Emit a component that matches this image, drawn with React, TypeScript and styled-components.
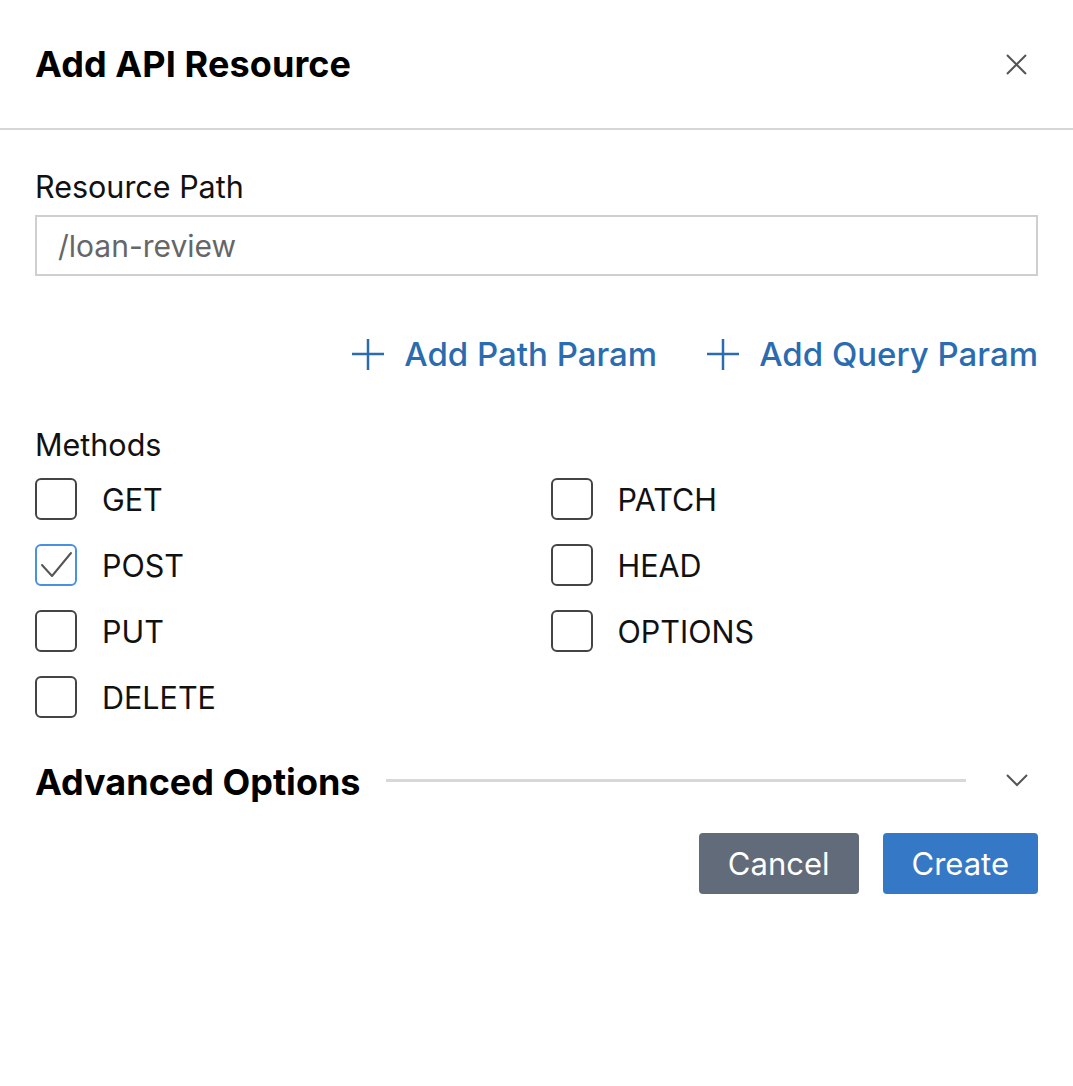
import React from 'react';
import styled, { createGlobalStyle } from 'styled-components';

const GlobalStyle = createGlobalStyle`
  html, body {
    margin: 0;
    padding: 0;
    background: #ffffff;
  }
  body {
    font-family: Inter, "Noto Sans", "Liberation Sans", sans-serif;
    color: #111111;
  }
  * {
    box-sizing: border-box;
  }
`;

const Dialog = styled.div`
  width: 1073px;
  min-height: 1086px;
  background: #ffffff;
`;

const Header = styled.div`
  height: 130px;
  padding: 0 46px 0 35px;
  display: flex;
  align-items: center;
  justify-content: space-between;
  border-bottom: 2px solid #d6d6d6;
`;

const Title = styled.h1`
  margin: 0;
  font-size: 36px;
  font-weight: 700;
  letter-spacing: 0.1px;
  line-height: 44px;
  color: #000;
`;

const IconButton = styled.button`
  border: none;
  background: none;
  padding: 0;
  width: 22px;
  height: 22px;
  display: flex;
  align-items: center;
  justify-content: center;
  color: #555;
  cursor: pointer;
`;

const Body = styled.div`
  padding: 38px 35px 0 35px;
  display: flex;
  flex-direction: column;
`;

const Label = styled.label`
  display: block;
  font-size: 30.5px;
  line-height: 38px;
  color: #111;
`;

const TextInput = styled.input`
  margin-top: 9px;
  width: 100%;
  height: 61px;
  border: 2px solid #cfcfcf;
  border-radius: 0;
  padding: 0 21px;
  font-family: inherit;
  font-size: 30px;
  color: #666;
  outline: none;
`;

const ParamRow = styled.div`
  margin-top: 58px;
  display: flex;
  justify-content: flex-end;
  gap: 50px;
`;

const LinkButton = styled.button`
  border: none;
  background: none;
  padding: 0;
  display: flex;
  align-items: center;
  gap: 20px;
  font-family: inherit;
  font-size: 33px;
  font-weight: 500;
  line-height: 40px;
  color: #2b6cb0;
  cursor: pointer;
`;

const MethodsLabel = styled(Label)`
  margin-top: 52px;
`;

const MethodGrid = styled.div`
  margin-top: 14px;
  display: grid;
  grid-template-columns: 1fr 1fr;
  column-gap: 28px;
`;

const MethodColumn = styled.div`
  display: flex;
  flex-direction: column;
  gap: 24px;
`;

const CheckRow = styled.label`
  display: flex;
  align-items: center;
  gap: 25px;
  height: 42px;
  font-size: 30.5px;
  color: #111;
`;

const Box = styled.span<{ $checked?: boolean }>`
  width: 42px;
  height: 42px;
  flex: none;
  border: 2px solid ${p => (p.$checked ? '#4a90e2' : '#444')};
  border-radius: 6px;
  display: flex;
  align-items: center;
  justify-content: center;
  color: #555;
`;

const AdvancedRow = styled.div`
  margin-top: 42px;
  display: flex;
  align-items: center;
`;

const SectionTitle = styled.h2`
  margin: 0;
  font-size: 36px;
  font-weight: 700;
  line-height: 44px;
  color: #000;
  white-space: nowrap;
`;

const Rule = styled.div`
  flex: 1;
  height: 3px;
  background: #d8d8d8;
  margin: 0 40px 4px 25px;
`;

const Chevron = styled.span`
  width: 22px;
  margin-right: 10px;
  margin-bottom: 4px;
  display: flex;
  justify-content: center;
  color: #555;
`;

const Footer = styled.div`
  margin-top: 29px;
  display: flex;
  justify-content: flex-end;
  gap: 24px;
`;

const ActionButton = styled.button<{ $variant: 'primary' | 'secondary' }>`
  height: 61px;
  padding: 0 29px;
  border: none;
  border-radius: 4px;
  background: ${p => (p.$variant === 'primary' ? '#3478c6' : '#626b79')};
  color: #ffffff;
  font-family: inherit;
  font-size: 31px;
  cursor: pointer;
`;

const Plus = () => (
  <svg width="32" height="32" viewBox="0 0 32 32" fill="none">
    <path d="M16 1v31M0 16h32" stroke="currentColor" strokeWidth="2.5" />
  </svg>
);

const Check = () => (
  <svg width="38" height="38" viewBox="0 0 38 38" fill="none">
    <path d="M5 19l10 11L34 7" stroke="currentColor" strokeWidth="2" strokeLinecap="round" strokeLinejoin="round" />
  </svg>
);

const methodsLeft = ['GET', 'POST', 'PUT', 'DELETE'];
const methodsRight = ['PATCH', 'HEAD', 'OPTIONS'];
const checked = ['POST'];

const MethodItem: React.FC<{ name: string }> = ({ name }) => {
  const isChecked = checked.includes(name);
  return (
    <CheckRow>
      <Box $checked={isChecked}>{isChecked && <Check />}</Box>
      {name}
    </CheckRow>
  );
};

export default function App() {
  return (
    <>
      <GlobalStyle />
      <Dialog>
        <Header>
          <Title>Add API Resource</Title>
          <IconButton aria-label="Close">
            <svg width="21" height="21" viewBox="0 0 21 21" fill="none">
              <path d="M1 1l19 19M20 1L1 20" stroke="currentColor" strokeWidth="2" />
            </svg>
          </IconButton>
        </Header>
        <Body>
          <Label>Resource Path</Label>
          <TextInput defaultValue="/loan-review" />
          <ParamRow>
            <LinkButton>
              <Plus />
              Add Path Param
            </LinkButton>
            <LinkButton>
              <Plus />
              Add Query Param
            </LinkButton>
          </ParamRow>
          <MethodsLabel>Methods</MethodsLabel>
          <MethodGrid>
            <MethodColumn>
              {methodsLeft.map(m => (
                <MethodItem key={m} name={m} />
              ))}
            </MethodColumn>
            <MethodColumn>
              {methodsRight.map(m => (
                <MethodItem key={m} name={m} />
              ))}
            </MethodColumn>
          </MethodGrid>
          <AdvancedRow>
            <SectionTitle>Advanced Options</SectionTitle>
            <Rule />
            <Chevron>
              <svg width="22" height="13" viewBox="0 0 22 13" fill="none">
                <path d="M1 1l10 10L21 1" stroke="currentColor" strokeWidth="2" />
              </svg>
            </Chevron>
          </AdvancedRow>
          <Footer>
            <ActionButton $variant="secondary">Cancel</ActionButton>
            <ActionButton $variant="primary">Create</ActionButton>
          </Footer>
        </Body>
      </Dialog>
    </>
  );
}
